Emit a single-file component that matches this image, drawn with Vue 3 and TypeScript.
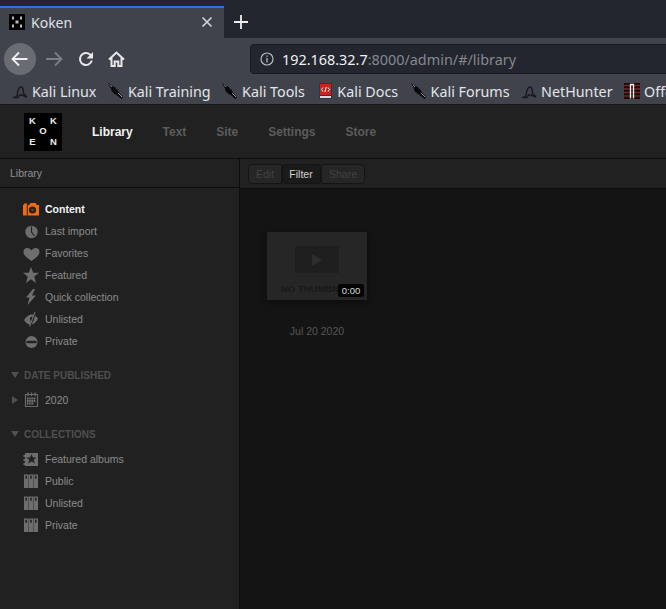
<template>
  <div class="page">
    <!-- browser chrome -->
    <div class="tabstrip">
      <div class="tab">
        <svg class="favicon" width="16" height="16" viewBox="0 0 16 16">
          <rect width="16" height="16" fill="#000" />
          <path d="M3 2.500h2v3H3zM11 2.500h2v3h-2zM6.500 6.500h3v3h-3zM3 10.500h2v3H3zM11 10.500h2v3h-2z" fill="#b9b9b9" />
        </svg>
        <span class="tab-title">Koken</span>
        <svg class="tab-close" width="12" height="12" viewBox="0 0 12 12">
          <path d="M1.500 1.500l9 9M10.500 1.500l-9 9" stroke="#d4d6da" stroke-width="1.600" />
        </svg>
      </div>
      <svg class="new-tab" width="14" height="14" viewBox="0 0 14 14">
        <path d="M7 0v14M0 7h14" stroke="#eceef0" stroke-width="1.800" />
      </svg>
    </div>

    <div class="toolbar">
      <div class="back">
        <svg width="18" height="16" viewBox="0 0 18 16">
          <path d="M1.500 8h15M8 1.500L1.500 8 8 14.500" fill="none" stroke="#eef0f2" stroke-width="1.800" />
        </svg>
      </div>
      <svg class="fwd" width="18" height="16" viewBox="0 0 18 16">
        <path d="M1 8h15M10 1.500L16.500 8 10 14.500" fill="none" stroke="#7c7f86" stroke-width="1.800" />
      </svg>
      <svg class="reload" width="16" height="16" viewBox="0 0 16 16">
        <path d="M13.800 9.500A6 6 0 1 1 12 3.500L13.500 5" fill="none" stroke="#e6e8ea" stroke-width="2" />
        <path d="M15 1v6.500H8.500z" fill="#e6e8ea" />
      </svg>
      <svg class="home" width="17" height="16" viewBox="0 0 17 16">
        <path d="M1 8.500l7.500-7 7.500 7M3.500 6.500V15h3.200v-4.500h3.600V15h3.200V6.500" fill="none" stroke="#e6e8ea" stroke-width="2" />
      </svg>
      <div class="urlbar">
        <svg width="14" height="14" viewBox="0 0 14 14">
          <circle cx="7" cy="7" r="6" fill="none" stroke="#b8bbc0" stroke-width="1.200" />
          <path d="M7 6v4.500M7 3.400v1.400" stroke="#b8bbc0" stroke-width="1.300" />
        </svg>
        <span class="url"><b>192.168.32.7</b>:8000/admin/#/library</span>
      </div>
    </div>

    <div class="bookmarks">
      <div v-for="b in bookmarks" :key="b.label" class="bookmark">
        <svg v-if="b.icon === 'dragon'" width="16" height="16" viewBox="0 0 16 16">
          <path d="M1 14.500c3 0 3.500-1 4-2 .5-4 1.500-8.500 4-8.500 2.200 0 2.500 3.500 2.500 6.500l3.500 3.500-5-2H7.500l-1.500 2.500z" fill="none" stroke="#17191d" stroke-width="1.400" />
        </svg>
        <svg v-else-if="b.icon === 'knife'" width="16" height="16" viewBox="0 0 16 16">
          <path d="M0 0l3 1.500 2 2 2 .5 1 2 1.500.500.500 1.500 5 6.500-1.500 1.500-5.500-4.500-2-.5-.500-1.500-1.500-.5L3 5.500z" fill="#08080a" />
          <path d="M2 1.500l2 2.500M10 10l4 4" stroke="#cfd1d4" stroke-width=".7" />
        </svg>
        <svg v-else-if="b.icon === 'docs'" width="16" height="16" viewBox="0 0 16 16">
          <rect x="2" width="13" height="16" fill="#2b3550" />
          <rect x="3" y="1" width="11" height="11" fill="#cf1f1f" />
          <path d="M6 4.500L4.500 6.500 6 8.500M11 4.500l1.500 2-1.500 2M9.200 4L7.800 9" fill="none" stroke="#fff" stroke-width="1" />
          <rect x="3" y="13" width="11" height="2" fill="#d9d9d9" />
        </svg>
        <svg v-else width="16" height="16" viewBox="0 0 16 16">
          <rect width="16" height="16" fill="#200808" />
          <path d="M0 2.500h16M0 6h16M0 9.500h16M0 13h16" stroke="#6b2a2a" stroke-width="1.300" />
          <path d="M6.500 15.500V1.500h3v14" fill="none" stroke="#eee" stroke-width="1.300" />
        </svg>
        <span>{{ b.label }}</span>
      </div>
    </div>

    <!-- koken admin -->
    <header class="app-head">
      <div class="logo">
        <span>K</span><span></span><span>K</span>
        <span></span><span>O</span><span></span>
        <span>E</span><span></span><span>N</span>
      </div>
      <nav class="main-nav">
        <a v-for="(n, i) in nav" :key="n" :class="{ active: i === 0 }">{{ n }}</a>
      </nav>
    </header>

    <div class="app-body">
      <aside class="sidebar">
        <div class="side-title">Library</div>
        <ul class="menu first">
          <li v-for="m in library" :key="m.label" :class="{ current: m.current }">
            <svg class="ico" width="18" height="16" viewBox="0 0 18 16" v-html="m.icon"></svg>
            <span>{{ m.label }}</span>
          </li>
        </ul>
        <h4 class="group"><i class="arrow down"></i>DATE PUBLISHED</h4>
        <ul class="menu year">
          <li>
            <i class="arrow right"></i>
            <svg class="ico" width="18" height="16" viewBox="0 0 18 16">
              <path d="M3.500 2.500h12v12h-12z" fill="none" stroke="#6a6a6a" stroke-width="1.200" />
              <path d="M6 .5v3.500M9.500 .5v3.500M13 .5v3.500" stroke="#6a6a6a" stroke-width="1.500" />
              <path d="M5 6.500h9M5 9h9M5 11.500h7" stroke="#7a7a7a" stroke-width="1.800" stroke-dasharray="1.500 .7" />
            </svg>
            <span>2020</span>
          </li>
        </ul>
        <h4 class="group"><i class="arrow down"></i>COLLECTIONS</h4>
        <ul class="menu coll">
          <li v-for="m in collections" :key="m.label">
            <svg class="ico" width="18" height="16" viewBox="0 0 18 16" v-html="m.icon"></svg>
            <span>{{ m.label }}</span>
          </li>
        </ul>
      </aside>

      <main class="content">
        <div class="actions">
          <div class="btn-group">
            <button class="off first-btn">Edit</button>
            <button class="on">Filter</button>
            <button class="off last-btn">Share</button>
          </div>
        </div>
        <div class="grid">
          <div class="item">
            <div class="thumb">
              <div class="play"><i></i></div>
              <div class="no-thumb">NO THUMBNAIL</div>
              <span class="dur">0:00</span>
            </div>
            <div class="date">Jul 20 2020</div>
          </div>
        </div>
      </main>
    </div>
  </div>
</template>

<script setup lang="ts">
type Icon = 'dragon' | 'knife' | 'docs' | 'off'

const bookmarks: { label: string; icon: Icon }[] = [
  { label: 'Kali Linux', icon: 'dragon' },
  { label: 'Kali Training', icon: 'knife' },
  { label: 'Kali Tools', icon: 'knife' },
  { label: 'Kali Docs', icon: 'docs' },
  { label: 'Kali Forums', icon: 'knife' },
  { label: 'NetHunter', icon: 'dragon' },
  { label: 'Offensive Security', icon: 'off' }
]

const nav = ['Library', 'Text', 'Site', 'Settings', 'Store']

const shelf =
  '<path d="M2 1.500h4.400V15H2zM6.800 1.500h4.400V15H6.800zM11.600 1.500H16V15h-4.400z" fill="#6e6e6e"/><path d="M3.400 2.800h1.600v3H3.400zM8.200 2.800h1.600v3H8.200zM13 2.800h1.600v3H13z" fill="#222"/>'

const library = [
  {
    label: 'Content',
    current: true,
    icon: '<path d="M1 4h.8V2.500h3.400V4h2L8.500 2h5l1.300 2H17v10.500H1z" fill="#f26a11"/><circle cx="10.500" cy="9" r="3.600" fill="#222"/><circle cx="10.500" cy="9" r="1.300" fill="#7a3a12"/><path d="M4.800 4h1v10.500h-1z" fill="#222"/>'
  },
  {
    label: 'Last import',
    icon: '<circle cx="9.500" cy="9" r="6.200" fill="#6e6e6e"/><path d="M9.500 3.500V9l3 4" fill="none" stroke="#222" stroke-width="1.100"/>'
  },
  {
    label: 'Favorites',
    icon: '<path d="M9.500 16C5 13 1.500 10.500 1.500 6.500 1.500 3 6.500 1.500 9.500 5.500 12.500 1.500 17.500 3 17.500 6.500 17.500 10.500 14 13 9.500 16z" fill="#6e6e6e"/>'
  },
  {
    label: 'Featured',
    icon: '<path d="M9 0l2.200 5.800H17l-4.700 3.700L14 16l-5-3.800L4 16l1.700-6.500L1 5.800h5.800z" fill="#6e6e6e"/>'
  },
  { label: 'Quick collection', icon: '<path d="M11 0L4 8.500h3.500L5.500 16 14 6.500h-4L13 0z" fill="#6e6e6e"/>' },
  {
    label: 'Unlisted',
    icon: '<path d="M2 9C4.500 5 7.500 3.500 10 3.500c2.500 0 4.500 1.500 6 4.500-2 3.500-4.500 5.500-7.500 5.500C6 13.500 4 12 2 9z" fill="#6e6e6e"/><circle cx="10" cy="8" r="2.200" fill="#222"/><path d="M13.500 1.500L8 15.500" stroke="#222" stroke-width="1.800"/><path d="M13 1L7.500 15.500" stroke="#6e6e6e" stroke-width="1.100"/>'
  },
  {
    label: 'Private',
    icon: '<circle cx="9.500" cy="9" r="6" fill="#6e6e6e"/><path d="M4.500 7.800h10v2.400h-10z" fill="#222"/>'
  }
]

const collections = [
  {
    label: 'Featured albums',
    icon: '<path d="M3 2h13v13H3z" fill="#6e6e6e"/><path d="M1.500 4h2v2h-2zM1.500 8h2v2h-2zM1.500 12h2v2h-2z" fill="#6e6e6e"/><path d="M9.500 3l1.500 3.400h3.700l-3 2.400 1.100 3.700-3.300-2.100-3.300 2.100 1.100-3.700-3-2.400H8z" fill="#222"/>'
  },
  { label: 'Public', icon: shelf },
  { label: 'Unlisted', icon: shelf },
  { label: 'Private', icon: shelf }
]
</script>

<style>
html,
body {
  margin: 0;
  background: #141414;
  overflow: hidden;
}
</style>

<style scoped>
.page {
  width: 666px;
  height: 609px;
  overflow: hidden;
  display: flex;
  flex-direction: column;
}

/* browser */
.tabstrip {
  height: 38px;
  flex: none;
  background: #23252f;
  display: flex;
  align-items: flex-end;
  font-family: "Noto Sans", sans-serif;
}

.tab {
  width: 224px;
  height: 32px;
  box-sizing: border-box;
  border-top: 2px solid #2a72dc;
  background: #40434c;
  display: flex;
  align-items: center;
  padding: 0 11px 2px 9px;
}

.tab-title {
  flex: 1;
  margin-left: 6px;
  font-size: 14px;
  color: #dfe1e5;
}

.new-tab {
  margin: 0 0 9px 10px;
}

.toolbar {
  height: 40px;
  flex: none;
  box-sizing: border-box;
  padding-top: 2px;
  background: #40434c;
  display: flex;
  align-items: center;
  font-family: "Noto Sans", sans-serif;
}

.back {
  width: 32px;
  height: 32px;
  margin-left: 4px;
  border-radius: 50%;
  background: #6a6c73;
  display: flex;
  align-items: center;
  justify-content: center;
  flex: none;
}

.fwd {
  margin-left: 9px;
  flex: none;
}

.reload {
  margin-left: 15px;
  flex: none;
}

.home {
  margin-left: 14px;
  flex: none;
}

.urlbar {
  margin-left: 125px;
  flex: 1;
  height: 30px;
  box-sizing: border-box;
  background: #23252f;
  border-radius: 4px 0 0 4px;
  margin-right: -4px;
  border: 1px solid #17181d;
  display: flex;
  align-items: center;
  padding-left: 9px;
  gap: 8px;
}

.url {
  font-size: 14.400px;
  color: #858990;
  white-space: nowrap;
}

.url b {
  font-weight: 400;
  color: #f0f1f3;
}

.bookmarks {
  height: 27px;
  flex: none;
  box-sizing: border-box;
  background: #40434c;
  border-bottom: 1px solid #17181d;
  display: flex;
  align-items: center;
  padding-left: 12px;
  gap: 11.500px;
  font-family: "Noto Sans", sans-serif;
  font-size: 14.300px;
  color: #e3e5e8;
  white-space: nowrap;
  overflow: hidden;
}

.bookmark {
  display: flex;
  align-items: center;
  gap: 4px;
}

.bookmark:nth-child(4) {
  margin: 0 1px;
}

/* app */
.app-head {
  height: 54px;
  flex: none;
  box-sizing: border-box;
  background: #212121;
  border-bottom: 1px solid #0d0d0d;
  display: flex;
  align-items: center;
  padding-left: 24px;
  font-family: "Liberation Sans", sans-serif;
}

.logo {
  width: 38px;
  height: 38px;
  background: #000;
  display: grid;
  grid-template-columns: repeat(3, 1fr);
  grid-template-rows: repeat(3, 1fr);
  padding: 3.500px 3.250px;
  box-sizing: border-box;
  color: #eee;
  font-size: 9.500px;
  font-weight: 700;
  text-align: center;
  line-height: 10.300px;
}

.main-nav {
  display: flex;
  margin-left: 30px;
  gap: 29.900px;
  font-size: 12px;
  font-weight: 700;
  color: #5c5c5c;
}

.main-nav .active {
  color: #f2f2f2;
}

.app-body {
  flex: 1;
  display: flex;
  min-height: 0;
  font-family: "Liberation Sans", sans-serif;
}

.sidebar {
  width: 240px;
  flex: none;
  box-sizing: border-box;
  background: #212121;
  border-right: 1px solid #0d0d0d;
  font-size: 10.500px;
  color: #8c8c8c;
}

.side-title {
  height: 29px;
  box-sizing: border-box;
  border-bottom: 1px solid #0d0d0d;
  padding-left: 10px;
  line-height: 28px;
  color: #8f939a;
}

.menu {
  list-style: none;
  margin: 0;
  padding: 0;
}

.menu.first {
  margin-top: 10px;
}

.menu.coll {
  margin-top: 3px;
}

.menu.year {
  margin-top: 3px;
}

.menu li {
  height: 22px;
  display: flex;
  align-items: center;
  padding-left: 22px;
}

.menu .ico {
  margin-right: 5px;
  flex: none;
}

.menu .current {
  color: #f4f4f4;
  font-weight: 700;
}

.group {
  margin: 12px 0 0;
  height: 22px;
  display: flex;
  align-items: center;
  padding-left: 11px;
  font-size: 10px;
  font-weight: 700;
  color: #4f4f4f;
}

.arrow {
  width: 0;
  height: 0;
  display: block;
  flex: none;
}

.arrow.down {
  border-left: 4px solid transparent;
  border-right: 4px solid transparent;
  border-top: 6px solid #4f4f4f;
  margin-right: 5px;
}

.arrow.right {
  border-top: 4px solid transparent;
  border-bottom: 4px solid transparent;
  border-left: 6px solid #4f4f4f;
  margin: 0 4px 0 -10px;
}

.content {
  flex: 1;
  background: #141414;
  min-width: 0;
}

.actions {
  height: 30px;
  box-sizing: border-box;
  background: #212121;
  border-bottom: 1px solid #0d0d0d;
  display: flex;
  align-items: center;
  padding-left: 8px;
}

.btn-group {
  display: flex;
}

.btn-group button {
  height: 20px;
  padding: 0;
  border: 1px solid #151515;
  font: 10.500px "Liberation Sans", sans-serif;
  background: #262626;
  color: #424242;
}

.first-btn {
  width: 34px;
  border-radius: 4px 0 0 4px;
}

.btn-group .on {
  width: 39px;
  padding-right: 1px;
  background: #1a1a1a;
  color: #d4d4d4;
  border-radius: 3px;
}

.last-btn {
  width: 44px;
  border-radius: 0 4px 4px 0;
}

.grid {
  padding: 43px 0 0 27px;
}

.item {
  width: 100px;
}

.thumb {
  position: relative;
  width: 100px;
  height: 68px;
  background: #262626;
  box-shadow: 0 2px 6px rgba(0, 0, 0, 0.5);
  overflow: hidden;
}

.play {
  width: 44px;
  height: 27px;
  margin: 14px auto 0;
  background: #1f1f1f;
  display: flex;
  align-items: center;
  justify-content: center;
}

.play i {
  border-top: 6px solid transparent;
  border-bottom: 6px solid transparent;
  border-left: 10px solid #2e2e2e;
}

.no-thumb {
  margin-top: 10px;
  padding-left: 14px;
  font-size: 9.500px;
  font-weight: 700;
  color: #191919;
  white-space: nowrap;
}

.dur {
  position: absolute;
  right: 3px;
  bottom: 3px;
  width: 26px;
  height: 13px;
  border-radius: 2px;
  background: #050505;
  color: #d8d8d8;
  font-size: 9.500px;
  line-height: 13px;
  text-align: center;
}

.date {
  margin-top: 25px;
  text-align: center;
  font-size: 10.500px;
  color: #565656;
}
</style>
